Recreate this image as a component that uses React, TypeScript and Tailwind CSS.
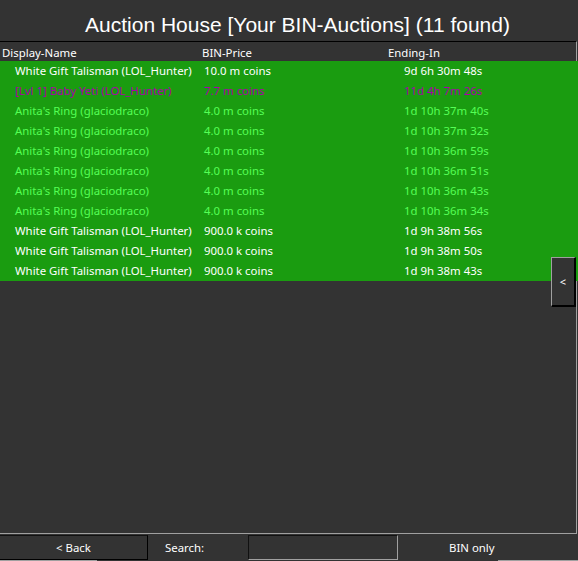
import React from "react";

type Row = { name: string; price: string; end: string; color: string };

const W = "text-white";
const P = "text-[#aa00aa]";
const G = "text-[#55ff55]";

const rows: Row[] = [
  { name: "White Gift Talisman (LOL_Hunter)", price: "10.0 m coins", end: "9d 6h 30m 48s", color: W },
  { name: "[Lvl 1] Baby Yeti (LOL_Hunter)", price: "7.7 m coins", end: "11d 4h 7m 26s", color: P },
  { name: "Anita's Ring (glaciodraco)", price: "4.0 m coins", end: "1d 10h 37m 40s", color: G },
  { name: "Anita's Ring (glaciodraco)", price: "4.0 m coins", end: "1d 10h 37m 32s", color: G },
  { name: "Anita's Ring (glaciodraco)", price: "4.0 m coins", end: "1d 10h 36m 59s", color: G },
  { name: "Anita's Ring (glaciodraco)", price: "4.0 m coins", end: "1d 10h 36m 51s", color: G },
  { name: "Anita's Ring (glaciodraco)", price: "4.0 m coins", end: "1d 10h 36m 43s", color: G },
  { name: "Anita's Ring (glaciodraco)", price: "4.0 m coins", end: "1d 10h 36m 34s", color: G },
  { name: "White Gift Talisman (LOL_Hunter)", price: "900.0 k coins", end: "1d 9h 38m 56s", color: W },
  { name: "White Gift Talisman (LOL_Hunter)", price: "900.0 k coins", end: "1d 9h 38m 50s", color: W },
  { name: "White Gift Talisman (LOL_Hunter)", price: "900.0 k coins", end: "1d 9h 38m 43s", color: W },
];

export default function App() {
  return (
    <div className="w-[578px] h-[561px] bg-[#333333] flex flex-col overflow-hidden text-white font-['Noto_Sans',sans-serif] text-[11.4px] leading-none">
      <div className="h-[41px] shrink-0 flex items-center justify-center font-['Liberation_Sans',Arial,sans-serif] text-[21px] text-white pt-[8px] pl-[17px]">
        Auction House [Your BIN-Auctions] (11 found)
      </div>
      <div className="relative flex-1 flex flex-col border-t border-t-black border-r border-r-[#a0a0a0] border-b border-b-[#a0a0a0] mr-[1px]">
        <div className="h-[19px] grid grid-cols-[200px_186px_1fr] items-center pt-[2px]">
          <div className="pl-[2px]">Display-Name</div>
          <div className="pl-[2px]">BIN-Price</div>
          <div className="pl-[2px]">Ending-In</div>
        </div>
        <div className="bg-[#1a9c10] -mr-[2px] flex flex-col">
          {rows.map((r, i) => (
            <div key={i} className={`h-[20px] grid grid-cols-[200px_186px_1fr] items-center ${r.color}`}>
              <div className="pl-[15px] whitespace-nowrap">{r.name}</div>
              <div className="pl-[4px] whitespace-nowrap">{r.price}</div>
              <div className="pl-[18px] whitespace-nowrap">{r.end}</div>
            </div>
          ))}
        </div>
        <button className="absolute left-[551px] top-[215px] w-[25px] h-[50px] bg-[#333333] border-l border-t border-l-[#a0a0a0] border-t-[#a0a0a0] border-r-2 border-b-2 border-r-black border-b-black flex items-center justify-center text-white text-[11px]">
          &lt;
        </button>
      </div>
      <div className="h-[27px] shrink-0 flex flex-col">
        <div className="h-[26px] flex items-stretch pt-[1px]">
          <div className="w-[148px] h-[25px] border-t border-r border-b border-t-[#111111] border-r-black border-b-black flex items-center justify-center">
            &lt; Back
          </div>
          <div className="w-[100px] flex items-center pl-[17px]">Search:</div>
          <div className="w-[150px] h-[25px] border-t border-l border-t-[#111111] border-l-[#111111] border-r border-b border-r-[#a0a0a0] border-b-[#a0a0a0]"></div>
          <div className="flex-1 flex items-center pl-[51px]">BIN only</div>
        </div>
        <div className="h-[1px] flex justify-between">
          <div className="w-[97px] bg-[#a0a0a0]"></div>
          <div className="w-[80px] bg-[#a0a0a0]"></div>
        </div>
      </div>
    </div>
  );
}
